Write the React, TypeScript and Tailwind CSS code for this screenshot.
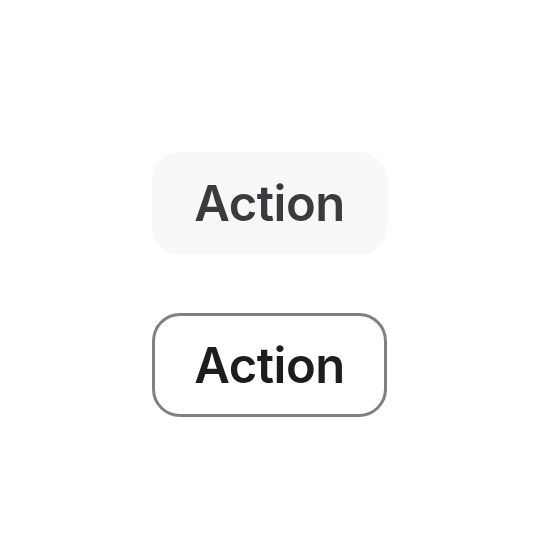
import React from 'react';

const label = "text-[49px] font-semibold leading-none tracking-[-0.01em]";

export default function App() {
  return (
    <div className="w-[560px] h-[560px] bg-white flex flex-col items-start pt-[152px] pl-[152px] gap-[58px] font-['Inter',sans-serif]">
      <button className="w-[235px] h-[103px] rounded-[28px] bg-[#f8f8f9] flex items-center justify-center">
        <span className={`${label} text-[#3a3b3e]`}>Action</span>
      </button>
      <button className="w-[235px] h-[104px] rounded-[28px] bg-white border-[3px] border-[#808083] flex items-center justify-center">
        <span className={`${label} text-[#1d1d1f]`}>Action</span>
      </button>
    </div>
  );
}
